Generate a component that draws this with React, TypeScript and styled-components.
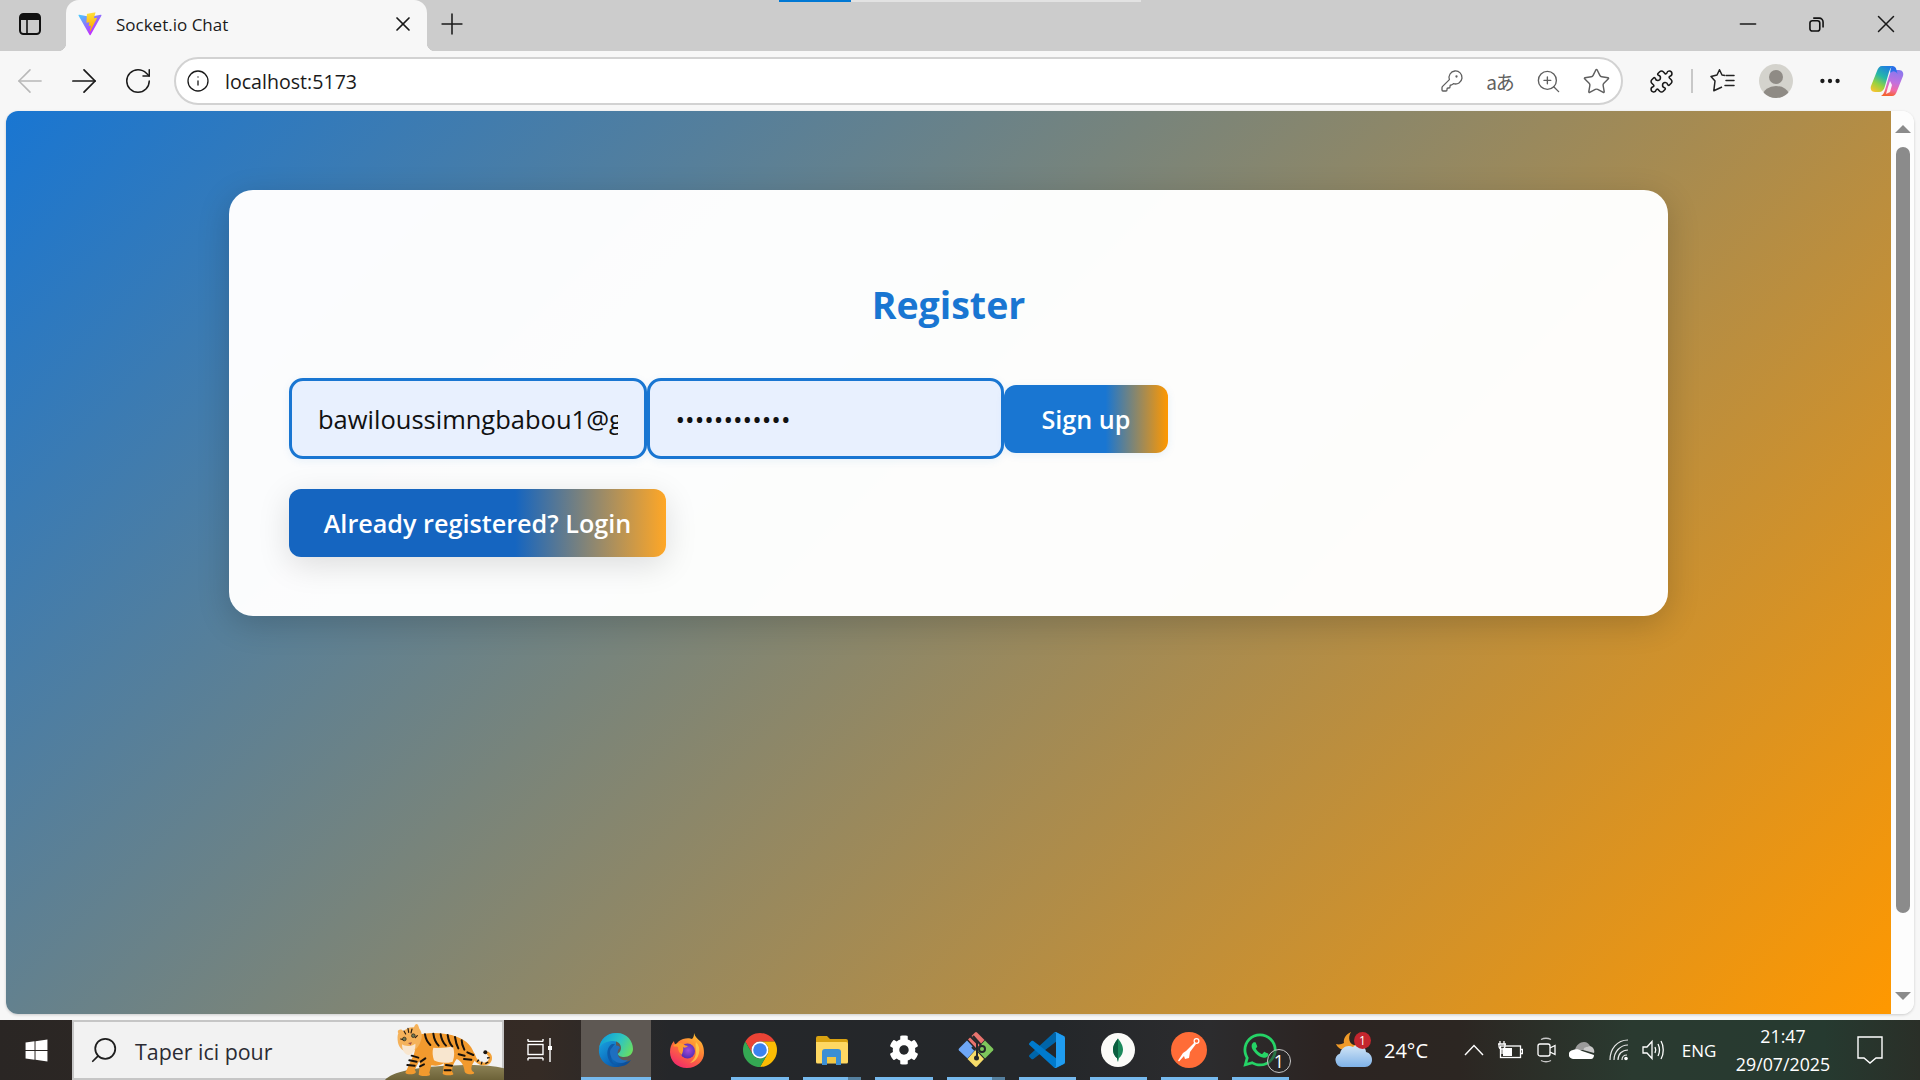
import * as React from "react";
import styled, { createGlobalStyle } from "styled-components";
import {
  ArrowLeft,
  ArrowRight,
  Info,
  KeyRound,
  Minus,
  MoreHorizontal,
  Plus,
  Puzzle,
  RotateCw,
  Search,
  Star,
  X,
  ZoomIn,
} from "lucide-react";
import { FaCog, FaWhatsapp, FaWindows } from "react-icons/fa";

const UI_FONT = `"Open Sans", "Noto Sans", "Liberation Sans", sans-serif`;

const GlobalStyle = createGlobalStyle`
  html, body {
    margin: 0;
    padding: 0;
    overflow: hidden;
    font-family: ${UI_FONT};
  }
  * { box-sizing: border-box; }
`;

const Frame = styled.div`
  width: 1920px;
  height: 1080px;
  display: flex;
  flex-direction: column;
  background: #f7f7f7;
`;

/* ---------- browser chrome ---------- */

const TabStrip = styled.div`
  position: relative;
  height: 51px;
  flex: none;
  display: flex;
  align-items: stretch;
  background: #cccccc;
`;

const Progress = styled.div`
  position: absolute;
  left: 779px;
  top: 0;
  width: 362px;
  height: 2px;
  background: #e2e2e2;
`;

const ProgressFill = styled.div`
  height: 100%;
  background: #0078d4;
`;

const Slot = styled.div<{ $w: number; $pb?: number; $ml?: number; $color?: string }>`
  width: ${(p) => p.$w}px;
  margin-left: ${(p) => p.$ml ?? 0}px;
  flex: none;
  display: flex;
  align-items: center;
  justify-content: center;
  padding-bottom: ${(p) => p.$pb ?? 0}px;
  color: ${(p) => p.$color ?? "#1a1a1a"};
`;

const Tab = styled.div`
  position: relative;
  width: 361px;
  margin-left: 6px;
  display: flex;
  align-items: center;
  background: #f7f7f7;
  border-radius: 13px 13px 0 0;
  padding: 0 0 3px 12px;

  &::before,
  &::after {
    content: "";
    position: absolute;
    bottom: 0;
    width: 8px;
    height: 8px;
  }
  &::before {
    left: -8px;
    background: radial-gradient(circle at 0 0, #cccccc 8px, #f7f7f7 8.5px);
  }
  &::after {
    right: -8px;
    background: radial-gradient(circle at 100% 0, #cccccc 8px, #f7f7f7 8.5px);
  }
`;

const TabTitle = styled.span`
  margin-left: 14px;
  flex: 1;
  font-size: 17px;
  color: #1b1b1b;
`;

const WindowControls = styled.div`
  margin-left: auto;
  display: flex;
`;

const Toolbar = styled.div`
  height: 60px;
  flex: none;
  display: flex;
  align-items: center;
  padding-left: 3px;
  background: #f7f7f7;
`;

const AddressBar = styled.div`
  width: 1449px;
  height: 48px;
  margin-left: 9px;
  display: flex;
  align-items: center;
  padding: 0 1px 0 2px;
  border: 2px solid #d2d2d2;
  border-radius: 24px;
  background: #fff;
`;

const Url = styled.span`
  flex: 1;
  margin-left: 8px;
  font-size: 19.6px;
  color: #1a1a1a;
`;

const Translate = styled.span`
  font-size: 19px;
  color: #606060;
  font-family: "Noto Sans CJK JP", sans-serif;
  letter-spacing: -1px;
`;

const ToolbarDivider = styled.div`
  width: 2px;
  height: 24px;
  margin: 0 4px 0 5px;
  background: #c8c8c8;
`;

const Avatar = styled.div`
  width: 34px;
  height: 34px;
  border-radius: 50%;
  overflow: hidden;
  background: #d4d3cd;
  display: flex;
`;

/* ---------- page ---------- */

const Viewport = styled.div`
  flex: 1;
  min-height: 0;
  margin: 0 6px 6px;
  display: flex;
  border-radius: 12px;
  overflow: hidden;
  background: #fff;
  box-shadow: 0 1px 3px rgba(0, 0, 0, 0.18);
`;

const Page = styled.main`
  flex: 1;
  min-width: 0;
  padding: 79px 223px 0;
  background: linear-gradient(135deg, #1976d2 0%, #ff9800 100%);
`;

const Card = styled.section`
  height: 426px;
  padding: 60px;
  border-radius: 24px;
  background: rgba(255, 255, 255, 0.98);
  box-shadow: 0 8px 32px rgba(0, 0, 0, 0.18);
`;

const Title = styled.h2`
  margin: 29px 0 47px;
  height: 52px;
  line-height: 52px;
  text-align: center;
  font-size: 37.5px;
  font-weight: 700;
  color: #1976d2;
`;

const FormRow = styled.form`
  display: flex;
  align-items: center;
  margin: 0;
`;

const TextInput = styled.input`
  width: 357.5px;
  height: 81px;
  padding: 0 26px;
  border: 3px solid #1976d2;
  border-radius: 14px;
  background: #e8f0fe;
  font-family: ${UI_FONT};
  font-size: 25.5px;
  color: #111;
  outline: none;
  box-shadow: 0 2px 8px rgba(25, 118, 210, 0.08);
`;

const PrimaryButton = styled.button<{ $secondary?: boolean }>`
  display: block;
  height: 68px;
  padding: 0;
  border: none;
  border-radius: 12px;
  font-family: ${UI_FONT};
  font-size: 25.2px;
  font-weight: 600;
  color: #fff;
  width: ${(p) => (p.$secondary ? 377 : 164)}px;
  margin-top: ${(p) => (p.$secondary ? 30 : 0)}px;
  background: ${(p) =>
    p.$secondary
      ? "linear-gradient(90deg, #1565c0 60%, #ffa726 100%)"
      : "linear-gradient(90deg, #1976d2 62%, #ff9800 100%)"};
  box-shadow: ${(p) =>
    p.$secondary
      ? "0 8px 32px rgba(0, 0, 0, 0.13)"
      : "0 2px 8px rgba(25, 118, 210, 0.1)"};
`;

const Scrollbar = styled.div`
  width: 23px;
  flex: none;
  display: flex;
  flex-direction: column;
  align-items: center;
  padding: 14px 0;
  background: #fdfdfd;
`;

const ScrollArrow = styled.div<{ $down?: boolean }>`
  flex: none;
  width: 0;
  height: 0;
  border-left: 8px solid transparent;
  border-right: 8px solid transparent;
  ${(p) =>
    p.$down
      ? "border-top: 8px solid #8b8b8b;"
      : "border-bottom: 8px solid #8b8b8b;"}
`;

const ScrollThumb = styled.div`
  width: 14px;
  height: 766px;
  margin: 14px 0 auto;
  border-radius: 7px;
  background: #8b8b8b;
`;

/* ---------- taskbar ---------- */

const Taskbar = styled.footer`
  height: 60px;
  flex: none;
  display: flex;
  align-items: stretch;
  color: #fff;
  background: linear-gradient(
    90deg,
    #2a2624 0%,
    #352b25 28%,
    #25272a 35%,
    #24272a 55%,
    #2c2c2e 63%,
    #2c2422 69%,
    #2c2622 76%,
    #2a3a30 85%,
    #263a30 95%,
    #2a2f28 100%
  );
`;

const StartButton = styled.div`
  width: 72px;
  flex: none;
  display: flex;
  align-items: center;
  justify-content: center;
`;

const SearchBox = styled.div`
  position: relative;
  width: 432px;
  flex: none;
  display: flex;
  align-items: center;
  padding-left: 15px;
  border: 2px solid #c6c6c6;
  background: #f2f2f2;
  color: #1e1e1e;
`;

const SearchGlyph = styled(Search)`
  transform: scaleX(-1);
`;

const SearchText = styled.span`
  margin: 2px 0 0 16px;
  font-size: 21.4px;
  color: #2b2b33;
`;

const Mascot = styled.svg`
  position: absolute;
  right: -2px;
  bottom: -2px;
`;

const TaskView = styled.div`
  width: 77px;
  flex: none;
  display: flex;
  align-items: center;
  padding-left: 23px;
`;

const TaskButton = styled.div<{ $active?: boolean; $w: number }>`
  width: ${(p) => p.$w}px;
  flex: none;
  display: flex;
  flex-direction: column;
  background: ${(p) => (p.$active ? "#5e5853" : "transparent")};
`;

const TaskIcon = styled.div`
  position: relative;
  flex: 1;
  display: flex;
  align-items: center;
  justify-content: center;
  padding-top: 2px;
`;

const Underline = styled.div<{ $w: number; $stacked?: boolean; $off?: boolean }>`
  flex: none;
  height: 3px;
  width: ${(p) => p.$w}px;
  margin: 0 auto;
  background: ${(p) =>
    p.$off
      ? "transparent"
      : p.$stacked
      ? "linear-gradient(90deg, #76b9ed 78%, #55809f 78%)"
      : "#76b9ed"};
`;

const CountBadge = styled.span`
  position: absolute;
  right: 5px;
  bottom: 4px;
  width: 24px;
  height: 24px;
  display: flex;
  align-items: center;
  justify-content: center;
  border: 1px solid #c8c8c8;
  border-radius: 50%;
  background: rgba(40, 40, 40, 0.55);
  font-size: 18px;
  color: #fff;
`;

const Tray = styled.div`
  margin-left: auto;
  display: flex;
  padding-right: 16px;
`;

const TrayItem = styled.div<{ $w: number; $ml?: number; $fs?: number }>`
  position: relative;
  width: ${(p) => p.$w}px;
  margin-left: ${(p) => p.$ml ?? 0}px;
  flex: none;
  display: flex;
  align-items: center;
  justify-content: center;
  font-size: ${(p) => p.$fs ?? 20}px;
  white-space: nowrap;
`;

const WeatherBadge = styled.span`
  position: absolute;
  top: 12px;
  right: 1px;
  width: 17px;
  height: 17px;
  display: flex;
  align-items: center;
  justify-content: center;
  border-radius: 50%;
  background: #c4262e;
  font-size: 12px;
  color: #fff;
`;

const Clock = styled.div`
  width: 106px;
  flex: none;
  display: flex;
  flex-direction: column;
  align-items: center;
  justify-content: center;
  gap: 5px;
  font-size: 17.8px;
  line-height: 23px;
`;

/* ---------- drawings ---------- */

const ViteIcon = () => (
  <svg width="24" height="24" viewBox="0 0 410 404">
    <defs>
      <linearGradient id="viteA" x1="6" y1="33" x2="235" y2="344" gradientUnits="userSpaceOnUse">
        <stop stopColor="#41d1ff" />
        <stop offset="1" stopColor="#bd34fe" />
      </linearGradient>
      <linearGradient id="viteB" x1="194" y1="8" x2="236" y2="292" gradientUnits="userSpaceOnUse">
        <stop stopColor="#ffea83" />
        <stop offset="0.08" stopColor="#ffdd35" />
        <stop offset="1" stopColor="#ffa800" />
      </linearGradient>
    </defs>
    <path
      fill="url(#viteA)"
      d="M399.641 59.525L215.643 388.545c-3.799 6.793-13.559 6.833-17.415.073L10.582 59.556C6.38 52.19 12.68 43.266 21.028 44.76l184.195 32.923c1.175.21 2.378.208 3.553-.006l180.343-32.87c8.32-1.517 14.649 7.337 10.522 14.718z"
    />
    <path
      fill="url(#viteB)"
      d="M292.965 1.574L156.801 28.255c-2.238.438-3.895 2.335-4.03 4.611l-8.376 141.464c-.197 3.332 2.863 5.918 6.115 5.168l37.91-8.749c3.547-.818 6.752 2.306 6.023 5.873l-11.263 55.153c-.758 3.712 2.727 6.886 6.352 5.785l23.415-7.114c3.63-1.102 7.118 2.081 6.35 5.796l-17.899 86.633c-1.12 5.419 6.088 8.374 9.094 3.728l2.008-3.103 110.954-221.428c1.858-3.707-1.346-7.935-5.418-7.15l-39.022 7.532c-3.667.707-6.787-2.708-5.752-6.296l25.469-88.291c1.036-3.594-2.095-7.012-5.766-6.293z"
    />
  </svg>
);

const SidebarIcon = () => (
  <svg width="22" height="22" viewBox="0 0 22 22">
    <rect x="1" y="1" width="20" height="20" rx="3.5" fill="none" stroke="#111" strokeWidth="2" />
    <path d="M1 4.5A3.5 3.5 0 0 1 4.5 1h13A3.5 3.5 0 0 1 21 4.5V7H1z" fill="#111" />
    <path d="M8 7v14" stroke="#111" strokeWidth="1.6" />
  </svg>
);

const RestoreIcon = () => (
  <svg width="15" height="15" viewBox="0 0 16 16" fill="none" stroke="#111" strokeWidth="1.7">
    <rect x="1" y="4" width="10.5" height="11" rx="2.5" />
    <path d="M4.5 1.2h6.5a4 4 0 0 1 4 4v6" />
  </svg>
);

const FavoritesIcon = () => (
  <svg width="25" height="24" viewBox="0 0 25 24" fill="none" stroke="#222" strokeWidth="1.5" strokeLinejoin="round">
    <path d="M15 6.5L12 6 9.5 .8 7 6 1 7.5 5 12 3.8 21.8 12 18" />
    <path d="M16 6.5h8M16 11.5h8M15 16.5h9" strokeLinecap="round" />
  </svg>
);

const CopilotIcon = () => (
  <svg width="34" height="32" viewBox="0 0 34 32">
    <defs>
      <linearGradient id="copL" x1="0.7" y1="0" x2="0.2" y2="1">
        <stop offset="0" stopColor="#1f7fe0" />
        <stop offset="0.4" stopColor="#25b8a8" />
        <stop offset="0.72" stopColor="#9ad23e" />
        <stop offset="1" stopColor="#f4c430" />
      </linearGradient>
      <linearGradient id="copR" x1="0.6" y1="0" x2="0.4" y2="1">
        <stop offset="0" stopColor="#8a78ee" />
        <stop offset="0.45" stopColor="#bf72e0" />
        <stop offset="0.75" stopColor="#f06aa8" />
        <stop offset="1" stopColor="#f4622e" />
      </linearGradient>
    </defs>
    <path fill="url(#copR)" d="M22 31H11c2-1 3-3 4-6l4-14c1-4 3-6 6-6h4c3.5 0 5 3 4 6l-6 15c-1 3-2.5 5-5 5z" />
    <path fill="url(#copL)" d="M12 1h11c-2 1-3 3-4 6l-4 14c-1 4-3 6-6 6H5c-3.500 0-5-3-4-6L7 6c1-3 2.500-5 5-5z" />
    <path fill="#2a6fe8" d="M22 1c2.500 0 4 1.500 4.500 4L27.500 9c-1-2-3-3-5-2.500L20 8c.5-3 1-6 2-7z" />
    <path fill="#fff" d="M20 16l2 4-2 7-4 2 2-7z" opacity="0.9" />
  </svg>
);

const TigerMascot = () => (
  <Mascot width="124" height="65" viewBox="0 0 372 195">
    <defs>
      <linearGradient id="mound" x1="0" y1="0" x2="0" y2="1">
        <stop offset="0" stopColor="#8d8256" />
        <stop offset="1" stopColor="#6c6238" />
      </linearGradient>
    </defs>
    <path fill="url(#mound)" d="M15 195C35 170 110 156 200 152c70-4 130-3 172 8v35z" />
    <path
      d="M280 118c6 22 22 32 38 28 16-5 18-22 5-32"
      fill="none"
      stroke="#f3a33a"
      strokeWidth="9"
      strokeLinecap="round"
    />
    <path d="M316 146l9-5M304 148l2-8M291 140l6-6M329 128l-8 1" stroke="#1b1510" strokeWidth="4" />
    <circle cx="316" cy="112" r="6" fill="#1b1510" />
    <path
      fill="#f29a2e"
      d="M105 62c35-12 90-10 125 3 30 10 50 32 56 62 1 12-10 18-12 32 0 6 2 10 8 13 2 4-2 6-8 6-10 0-18-2-20-8-2-18-10-32-24-38-8 10-14 24-14 38 4 4 6 8 2 9-10 3-24 2-30-2l4-32c-12 8-26 8-38 6l-6 22c4 6 2 8-4 9-12 2-24 0-28-3l4-34-2-8-14 28c6 6 4 10-4 12-10 2-22 0-24-4l26-56 10-40z"
    />
    <path fill="#f8e6cf" d="M160 98c20 2 42 0 58-4 6 14 6 30 0 46-20 6-44 4-56-4-4-12-6-26-2-38z" />
    <g stroke="#17110c" strokeWidth="6" strokeLinecap="round" fill="none">
      <path d="M135 58c2 14 8 24 16 32" />
      <path d="M160 56c2 16 8 28 16 36" />
      <path d="M182 58c2 14 8 26 16 34" />
      <path d="M203 60c2 14 8 28 14 34" />
      <path d="M225 66c2 14 6 26 10 34" />
      <path d="M245 76c0 10 4 20 8 28" />
      <path d="M262 112l18 8M252 132l22 2M236 118l18 4" />
      <path d="M95 122l20 6M88 136l22 4M82 150l22 2" />
      <path d="M136 130l-14 10M132 148l-12 6" />
      <path d="M198 150l18 2M194 166l18 0" />
    </g>
    <path fill="#f5b25a" d="M55 46c6-4 12-2 15 3 8-8 20-14 32-12 2-5 4-10 8-10 5 1 6 8 8 14 8 10 10 24 4 38-6 18-16 30-34 32-18 0-30-12-34-28-2-12-2-22 1-28-2-3-2-6 0-9z" />
    <path fill="#f8e6cf" d="M66 88c8 6 28 8 40-2 2 14-6 32-20 34-12 0-20-14-20-32z" />
    <g stroke="#2a1d12" strokeWidth="3.5" fill="none" strokeLinecap="round">
      <path d="M84 40l2 12M96 42l-3 12M72 48l5 9" />
      <path d="M62 72l8 2M112 62l-6 6" />
    </g>
    <circle cx="73" cy="72" r="5.5" fill="#6f7a55" stroke="#221811" strokeWidth="2" />
    <circle cx="100" cy="62" r="5.5" fill="#6f7a55" stroke="#221811" strokeWidth="2" />
    <path d="M84 84l12-2-4 8z" fill="#a0524a" />
  </Mascot>
);

const TaskViewIcon = () => (
  <svg width="26" height="24" viewBox="0 0 26 24" fill="none" stroke="#fff" strokeWidth="1.4">
    <path d="M1 3.5V1M16 3.5V1M1 3.4h15" />
    <rect x="1" y="6.5" width="15" height="10" />
    <path d="M1 20v2.5M16 20v2.5M1 20h15" />
    <path d="M23 0v24" />
    <rect x="21" y="8" width="4" height="4" fill="#fff" stroke="none" />
  </svg>
);

const EdgeIcon = () => (
  <svg width="36" height="36" viewBox="0 0 36 36">
    <defs>
      <linearGradient id="edgeBase" x1="0" y1="0.2" x2="0.7" y2="1">
        <stop offset="0" stopColor="#1aa5e0" />
        <stop offset="0.6" stopColor="#0d6fc0" />
        <stop offset="1" stopColor="#0b4f9c" />
      </linearGradient>
      <linearGradient id="edgeTop" x1="0" y1="0.3" x2="1" y2="0.7">
        <stop offset="0" stopColor="#0f9fd8" />
        <stop offset="0.55" stopColor="#2fc5c0" />
        <stop offset="1" stopColor="#6ade60" />
      </linearGradient>
    </defs>
    <path fill="url(#edgeBase)" d="M1 17C2 7 9 1 18 1v17c-2 6 1 12 8 12 3 0 5-.7 7-2-3 5-9 7-15 7C8 35 0 27 1 17z" />
    <path fill="url(#edgeTop)" d="M1 16C3 7 10 1 19 1c10 0 16 8 16 16 0 5-4 8-9 8-3 0-6-1-6-3 0-1 3-2 3-6 0-4-3-7-8-7C9 9 4 11 1 16z" />
    <path fill="#0e5aa8" d="M14 12c-5 3-6 10-3 16 2 4 6 6 12 6-6 0-10-4-10-11 0-5 1-8 4-11z" />
    <path fill="#1e6fc0" d="M15 15c2-2 6-2 7 1-2 1-3 4-2 7 1 4 5 6 10 5-2 2-4 3-7 3-6 0-11-5-11-11 0-2 1-4 3-5z" />
  </svg>
);

const FirefoxIcon = () => (
  <svg width="36" height="36" viewBox="0 0 36 36">
    <defs>
      <linearGradient id="ffBase" x1="0.8" y1="0" x2="0.2" y2="1">
        <stop offset="0" stopColor="#ffc42f" />
        <stop offset="0.5" stopColor="#ff7139" />
        <stop offset="1" stopColor="#f0246e" />
      </linearGradient>
      <radialGradient id="ffOrb" cx="0.55" cy="0.45" r="0.6">
        <stop offset="0" stopColor="#a34bd8" />
        <stop offset="1" stopColor="#4a2bb0" />
      </radialGradient>
    </defs>
    <path fill="url(#ffBase)" d="M25 1c1 4 4 6 7 9 3 4 3 9 3 11 0 8-7 15-17 15C8 36 1 29 1 20c0-4 1-8 4-11 0 2 1 3 2 4 1-3 4-5 7-6 3-1 7-1 9 0 2-2 2-4 2-6z" />
    <circle cx="18.5" cy="19" r="7.5" fill="url(#ffOrb)" />
    <path fill="#ff9a2e" d="M4 14c3-3 7-4 10-2 2 1 3 2 5 2-2 2-4 2-5 1 1 3-1 6-1 8-3-2-4-5-4-8-2-1-3 0-5-1z" />
    <path fill="#ffdc4a" d="M27 10c3 3 4 7 3 11-1 5-4 9-9 10 4-3 6-7 6-11 0-4-1-7 0-10z" opacity="0.7" />
  </svg>
);

const ChromeIcon = () => (
  <svg width="36" height="36" viewBox="0 0 36 36">
    <path fill="#ea4335" d="M3.28 9.5A17 17 0 0 1 32.72 9.5H18a8.5 8.5 0 0 0-7.4 12.7z" />
    <path fill="#fbbc04" d="M32.72 9.5A17 17 0 0 1 18 35l7.4-12.8A8.5 8.5 0 0 0 18 9.5z" />
    <path fill="#34a853" d="M18 35A17 17 0 0 1 3.28 9.5l7.4 12.8a8.5 8.5 0 0 0 14.7 0z" />
    <circle cx="18" cy="18" r="8.5" fill="#fff" />
    <circle cx="18" cy="18" r="6.8" fill="#3b82f0" />
  </svg>
);

const FolderIcon = () => (
  <svg width="34" height="30" viewBox="0 0 34 30">
    <path fill="#d9a211" d="M1 3a2 2 0 0 1 2-2h9l3 3h16a2 2 0 0 1 2 2v6H1z" />
    <path fill="#ffd862" d="M1 7h30a2 2 0 0 1 2 2v18a1.5 1.5 0 0 1-1.5 1.5h-29A1.5 1.5 0 0 1 1 27z" />
    <path fill="#3c8fd4" d="M7 17a3 3 0 0 1 3-3h13a3 3 0 0 1 3 3v13h-5v-8H12v8H7z" />
    <path fill="#f2c744" d="M12 22h9v6h-9z" />
  </svg>
);

const GitIcon = () => (
  <svg width="36" height="37" viewBox="0 0 36 37">
    <path fill="#7ec75c" d="M27 9.5l8 8a1.5 1.5 0 0 1 0 2l-8 8-8.5-9z" />
    <path fill="#f6dc6a" d="M9.5 28l7.5-8.5h1l8 8.5-7 7.5a1.5 1.5 0 0 1-2 0z" />
    <path fill="#6ea7f5" d="M9 9.5l8.5 9-8 9-8.5-8a1.5 1.5 0 0 1 0-2z" />
    <path fill="#e8736e" d="M10 8.5l7-7a1.5 1.5 0 0 1 2 0l7.5 7.5-8 8.500z" />
    <g stroke="#24272a" strokeWidth="2" fill="none">
      <path d="M12 5l7 7v14M17 19l-3-3" />
      <circle cx="24" cy="18" r="3" />
      <path d="M15 5l8 9" />
    </g>
    <circle cx="18.5" cy="27" r="2.5" fill="#24272a" />
  </svg>
);

const VsCodeIcon = () => (
  <svg width="36" height="36" viewBox="0 0 100 100">
    <path
      fill="#0065a9"
      d="M96.46 10.8L75.86.9C73.47-.25 70.62.24 68.75 2.11L1.3 63.6c-1.81 1.65-1.81 4.5.01 6.15l5.51 5c1.49 1.35 3.72 1.45 5.32.24L93.3 13.37c2.72-2.06 6.62-.12 6.62 3.3v-.24c0-2.4-1.37-4.59-3.46-5.63z"
    />
    <path
      fill="#007acc"
      d="M96.46 89.2L75.86 99.1c-2.39 1.15-5.24.66-7.11-1.21L1.3 36.4c-1.81-1.65-1.81-4.5.01-6.15l5.51-5c1.49-1.35 3.72-1.45 5.32-.24l81.16 61.62c2.72 2.06 6.62.12 6.62-3.3v.24c0 2.4-1.37 4.59-3.46 5.63z"
    />
    <path
      fill="#1f9cf0"
      d="M75.86 99.13c-2.39 1.15-5.24.66-7.11-1.21 2.31 2.31 6.25.67 6.25-2.59V4.67c0-3.26-3.94-4.9-6.25-2.59 1.87-1.87 4.72-2.36 7.11-1.21l20.6 9.91c2.16 1.04 3.54 3.22 3.54 5.63v67.17c0 2.41-1.38 4.59-3.54 5.63z"
    />
  </svg>
);

const MongoIcon = () => (
  <svg width="34" height="34" viewBox="0 0 34 34">
    <circle cx="17" cy="17" r="17" fill="#fbfbf8" />
    <path fill="#1c8a5c" d="M17 5.500c2.500 3.500 5 6.500 5 11 0 4.500-2.500 7.500-4 8.500l-1 4-1-4c-1.500-1-4-4-4-8.500 0-4.500 2.500-7.500 5-11z" />
    <path fill="#0b5e3f" d="M17 5.500c-2.500 3.500-5 6.500-5 11 0 4.500 2.500 7.500 4 8.500l1 4z" />
  </svg>
);

const PostmanIcon = () => (
  <svg width="36" height="36" viewBox="0 0 36 36">
    <circle cx="18" cy="18" r="18" fill="#ff6c37" />
    <circle cx="25.5" cy="9" r="2.4" fill="none" stroke="#fff" strokeWidth="1.2" />
    <path fill="#fff" d="M23.5 10.500L25 12l-6 8-1 6-4 1-1-3-5 5.500-1-1 5-7.500 3-2z" />
  </svg>
);

const WeatherIcon = () => (
  <svg width="38" height="38" viewBox="0 0 38 38">
    <defs>
      <linearGradient id="cloud" x1="0" y1="0" x2="0" y2="1">
        <stop offset="0" stopColor="#d3e6f6" />
        <stop offset="1" stopColor="#7fb2e8" />
      </linearGradient>
    </defs>
    <path fill="#f09a28" d="M17 1c-5 2-8 7-7 11-2 1-5 2-8 1 2 5 8 7 12 6 4 0 7-2 8-5-6 1-9-7-5-13z" />
    <path fill="url(#cloud)" d="M8 36a7 7 0 0 1-2-13.500C7 17 13 13 19 16c3-4 13-2 13 5 4 1 6 4 6 8 0 4-3 7-7 7z" />
  </svg>
);

const BatteryIcon = () => (
  <svg width="26" height="18" viewBox="0 0 26 18" fill="none" stroke="#fff" strokeWidth="1.3">
    <rect x="3.5" y="5" width="20" height="11.5" />
    <path d="M24 8.500h1.500v4H24" />
    <rect x="6" y="7" width="9" height="8" fill="#fff" stroke="none" />
    <path d="M1 3h8M3 0v3M7 0v3M2 3v2a3 3 0 0 0 6 0V3M5 8v5" stroke="#fff" />
  </svg>
);

const CameraIcon = () => (
  <svg width="20" height="26" viewBox="0 0 20 26" fill="none" stroke="#fff" strokeWidth="1.3">
    <rect x="1" y="7" width="12" height="12" rx="2" />
    <path d="M13 11l5-2.500v9L13 15" />
    <path d="M4 2.500c3-1.500 7-1.500 10 0M4 23.500c3 1.500 7 1.500 10 0" stroke="#c8c8c8" />
  </svg>
);

const OneDriveIcon = () => (
  <svg width="26" height="18" viewBox="0 0 26 18">
    <path fill="#9a9a9a" d="M6 9c1-5 5-8 9-8 3 0 5 2 6 4-3 0-6 2-7 4z" />
    <path fill="#c8c8c8" d="M14 9c1-3 4-4 7-4 3 1 5 4 4 7z" />
    <path fill="#fff" d="M4.500 18A4.500 4.500 0 0 1 4 9c2-1 6-1 9 1l12 4c0 2-1 4-3 4z" />
  </svg>
);

const WifiIcon = () => (
  <svg width="20" height="22" viewBox="0 0 20 22" fill="none" stroke="#e8e8e8" strokeWidth="1.2">
    <path d="M1 21C1 10 8 1 19 1" />
    <path d="M5 21c0-8 6-15 14-15" />
    <path d="M9 21c0-6 4-10 10-10" />
    <path d="M13 21c0-3 2-5 5-5" />
    <circle cx="17" cy="19.5" r="1.8" fill="#fff" stroke="none" />
  </svg>
);

const VolumeIcon = () => (
  <svg width="24" height="22" viewBox="0 0 24 22" fill="none" stroke="#fff" strokeWidth="1.3">
    <path d="M1 8h4l5-5.500v17L5 14H1z" />
    <path d="M13 8c1 2 1 4 0 6M16 5c2 4 2 8 0 12M19 2c3 5 3 13 0 18" />
  </svg>
);

const NotifyIcon = () => (
  <svg width="26" height="28" viewBox="0 0 26 28" fill="none" stroke="#fff" strokeWidth="1.4">
    <path d="M1 1h24v21h-6l-6 5-6-5H1z" />
  </svg>
);

const ChevronUp = () => (
  <svg width="20" height="12" viewBox="0 0 20 12" fill="none" stroke="#fff" strokeWidth="1.4">
    <path d="M1 11l9-9.500L19 11" />
  </svg>
);

export default function App() {
  return (
    <>
      <GlobalStyle />
      <Frame>
        <TabStrip>
          <Progress>
            <ProgressFill style={{ width: `${(72 / 362) * 100}%` }} />
          </Progress>
          <Slot $w={60} $pb={3}>
            <SidebarIcon />
          </Slot>
          <Tab>
            <ViteIcon />
            <TabTitle>Socket.io Chat</TabTitle>
            <Slot $w={48}>
              <X size={24} strokeWidth={1.7} />
            </Slot>
          </Tab>
          <Slot $w={50} $pb={3}>
            <Plus size={34} strokeWidth={1.1} />
          </Slot>
          <WindowControls>
            <Slot $w={69} $pb={3}>
              <Minus size={26} strokeWidth={1.5} />
            </Slot>
            <Slot $w={69} $pb={3}>
              <RestoreIcon />
            </Slot>
            <Slot $w={69} $pb={3}>
              <X size={30} strokeWidth={1.2} />
            </Slot>
          </WindowControls>
        </TabStrip>

        <Toolbar>
          <Slot $w={54} $color="#b8b8b8">
            <ArrowLeft size={38} strokeWidth={1} />
          </Slot>
          <Slot $w={54}>
            <ArrowRight size={38} strokeWidth={1.1} />
          </Slot>
          <Slot $w={54}>
            <RotateCw size={30} strokeWidth={1.2} />
          </Slot>
          <AddressBar>
            <Slot $w={39}>
              <Info size={24} strokeWidth={1.3} />
            </Slot>
            <Url>localhost:5173</Url>
            <Slot $w={48} $color="#5f5f5f">
              <KeyRound size={24} strokeWidth={1.3} />
            </Slot>
            <Slot $w={48}>
              <Translate>aあ</Translate>
            </Slot>
            <Slot $w={48} $color="#5f5f5f">
              <ZoomIn size={27} strokeWidth={1.2} />
            </Slot>
            <Slot $w={48} $color="#5f5f5f">
              <Star size={29} strokeWidth={1.2} />
            </Slot>
          </AddressBar>
          <Slot $w={50} $ml={13}>
            <Puzzle size={25} strokeWidth={1.5} />
          </Slot>
          <ToolbarDivider />
          <Slot $w={50}>
            <FavoritesIcon />
          </Slot>
          <Slot $w={58}>
            <Avatar>
              <svg width="34" height="34" viewBox="0 0 34 34" fill="#8f8b85">
                <circle cx="17" cy="13" r="7" />
                <ellipse cx="17" cy="31" rx="13" ry="9" />
              </svg>
            </Avatar>
          </Slot>
          <Slot $w={50}>
            <MoreHorizontal size={26} strokeWidth={2} />
          </Slot>
          <Slot $w={64}>
            <CopilotIcon />
          </Slot>
        </Toolbar>

        <Viewport>
          <Page>
            <Card>
              <Title>Register</Title>
              <FormRow onSubmit={(e) => e.preventDefault()}>
                <TextInput type="email" readOnly value="bawiloussimngbabou1@gmail.com" />
                <TextInput type="password" readOnly value="passw0rd1234" />
                <PrimaryButton type="submit">Sign up</PrimaryButton>
              </FormRow>
              <PrimaryButton type="button" $secondary>
                Already registered? Login
              </PrimaryButton>
            </Card>
          </Page>
          <Scrollbar>
            <ScrollArrow />
            <ScrollThumb />
            <ScrollArrow $down />
          </Scrollbar>
        </Viewport>

        <Taskbar>
          <StartButton>
            <FaWindows size={25} color="#fff" />
          </StartButton>
          <SearchBox>
            <SearchGlyph size={30} strokeWidth={1.4} />
            <SearchText>Taper ici pour</SearchText>
            <TigerMascot />
          </SearchBox>
          <TaskView>
            <TaskViewIcon />
          </TaskView>
          <TaskButton $active $w={70}>
            <TaskIcon>
              <EdgeIcon />
            </TaskIcon>
            <Underline $w={70} />
          </TaskButton>
          <TaskButton $w={72.5}>
            <TaskIcon>
              <FirefoxIcon />
            </TaskIcon>
            <Underline $w={58} $off />
          </TaskButton>
          <TaskButton $w={72.5}>
            <TaskIcon>
              <ChromeIcon />
            </TaskIcon>
            <Underline $w={58} />
          </TaskButton>
          <TaskButton $w={72}>
            <TaskIcon>
              <FolderIcon />
            </TaskIcon>
            <Underline $w={58} $stacked />
          </TaskButton>
          <TaskButton $w={72}>
            <TaskIcon>
              <FaCog size={30} color="#fff" />
            </TaskIcon>
            <Underline $w={58} />
          </TaskButton>
          <TaskButton $w={71.5}>
            <TaskIcon>
              <GitIcon />
            </TaskIcon>
            <Underline $w={58} $stacked />
          </TaskButton>
          <TaskButton $w={71}>
            <TaskIcon>
              <VsCodeIcon />
            </TaskIcon>
            <Underline $w={57} />
          </TaskButton>
          <TaskButton $w={71}>
            <TaskIcon>
              <MongoIcon />
            </TaskIcon>
            <Underline $w={57} />
          </TaskButton>
          <TaskButton $w={71}>
            <TaskIcon>
              <PostmanIcon />
            </TaskIcon>
            <Underline $w={57} />
          </TaskButton>
          <TaskButton $w={71.5}>
            <TaskIcon>
              <FaWhatsapp size={38} color="#25d366" />
              <CountBadge>1</CountBadge>
            </TaskIcon>
            <Underline $w={57} />
          </TaskButton>
          <Tray>
            <TrayItem $w={38}>
              <WeatherIcon />
              <WeatherBadge>1</WeatherBadge>
            </TrayItem>
            <TrayItem $w={46} $ml={11}>
              24°C
            </TrayItem>
            <TrayItem $w={36} $ml={27}>
              <ChevronUp />
            </TrayItem>
            <TrayItem $w={36}>
              <BatteryIcon />
            </TrayItem>
            <TrayItem $w={38}>
              <CameraIcon />
            </TrayItem>
            <TrayItem $w={32}>
              <OneDriveIcon />
            </TrayItem>
            <TrayItem $w={42}>
              <WifiIcon />
            </TrayItem>
            <TrayItem $w={28}>
              <VolumeIcon />
            </TrayItem>
            <TrayItem $w={62} $fs={17}>
              ENG
            </TrayItem>
            <Clock>
              <span>21:47</span>
              <span>29/07/2025</span>
            </Clock>
            <TrayItem $w={68}>
              <NotifyIcon />
            </TrayItem>
          </Tray>
        </Taskbar>
      </Frame>
    </>
  );
}
